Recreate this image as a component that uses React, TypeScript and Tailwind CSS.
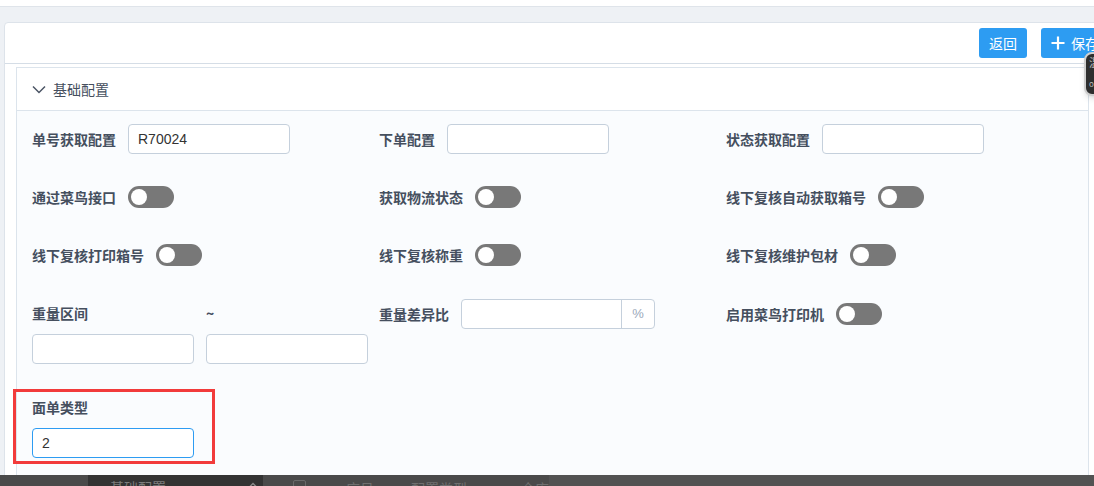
import React from "react";

const LABEL = "text-[14px] font-bold text-[#454f5e] whitespace-nowrap leading-none";

function Toggle() {
  return (
    <div className="w-[46px] h-[22px] rounded-full bg-[#787878] p-[3px] flex items-center shrink-0">
      <div className="w-4 h-4 rounded-full bg-white" />
    </div>
  );
}

function TextBox({ value = "", focus = false, w = "w-[162px]" }: { value?: string; focus?: boolean; w?: string }) {
  return (
    <div
      className={`${w} h-[30px] shrink-0 rounded-[4px] border bg-white flex items-center px-[9px] text-[14px] text-[#333] font-['Liberation_Sans',Arial,sans-serif] ${
        focus ? "border-[#2d9cf2]" : "border-[#c5d0dc]"
      }`}
    >
      {value}
    </div>
  );
}

function Row({ label, children }: { label: string; children: React.ReactNode }) {
  return (
    <div className="h-[30px] flex items-center gap-3">
      <span className={LABEL}>{label}</span>
      {children}
    </div>
  );
}

export default function App() {
  return (
    <div className="relative w-[1094px] h-[486px] overflow-hidden flex flex-col bg-white font-['Noto_Sans_CJK_SC','Liberation_Sans',sans-serif]">
      <div className="flex-1 min-h-0 overflow-hidden flex flex-col">
        <div className="h-[6px] bg-white shrink-0" />
        <div className="flex-1 border-t border-[#dfe4ea] bg-[#eef1f5] pt-[15px] pl-[4px]">
          <div className="w-[1110px] h-[600px] bg-white border border-[#dde3ea] rounded-[4px]">
            {/* header */}
            <div className="h-[41px] border-b border-[#d5dde6] flex items-center justify-end pr-[6px] gap-[14px]">
              <button className="w-[48px] h-[30px] rounded-[3px] bg-[#2d9cf2] text-white text-[14px] flex items-center justify-center">
                返回
              </button>
              <button className="w-[66px] h-[30px] rounded-[3px] bg-[#2d9cf2] text-white text-[14px] flex items-center pl-[10px] gap-[6px]">
                <svg width="14" height="14" viewBox="0 0 14 14">
                  <path d="M7 0.5V13.5M0.5 7H13.5" stroke="white" strokeWidth="2.2" />
                </svg>
                保存
              </button>
            </div>
            {/* body */}
            <div className="pt-[3px] pl-[11px]">
              <div className="w-[1073px] border border-[#dce4ec] bg-[#fafcfe]">
                <div className="h-[43px] bg-white border-b border-[#dce4ec] flex items-center pl-[15px] gap-[7px]">
                  <svg width="14" height="9" viewBox="0 0 14 9">
                    <polyline points="1,1.5 7,7.5 13,1.5" fill="none" stroke="#4a5464" strokeWidth="1.5" />
                  </svg>
                  <span className="text-[14px] text-[#454f5e]">基础配置</span>
                </div>
                <div className="pt-[13px] pl-[15px] pb-[28px]">
                  <div className="w-[1041px] grid grid-cols-3 gap-y-[28px] items-start">
                    <Row label="单号获取配置">
                      <TextBox value="R70024" />
                    </Row>
                    <Row label="下单配置">
                      <TextBox />
                    </Row>
                    <Row label="状态获取配置">
                      <TextBox />
                    </Row>

                    <Row label="通过菜鸟接口">
                      <Toggle />
                    </Row>
                    <Row label="获取物流状态">
                      <Toggle />
                    </Row>
                    <Row label="线下复核自动获取箱号">
                      <Toggle />
                    </Row>

                    <Row label="线下复核打印箱号">
                      <Toggle />
                    </Row>
                    <Row label="线下复核称重">
                      <Toggle />
                    </Row>
                    <Row label="线下复核维护包材">
                      <Toggle />
                    </Row>

                    <div className="grid grid-cols-[162px_162px] gap-x-3 gap-y-[6px]">
                      <div className={`h-[30px] flex items-center ${LABEL}`}>重量区间</div>
                      <div className={`h-[30px] flex items-center ${LABEL}`}>~</div>
                      <TextBox />
                      <TextBox />
                    </div>
                    <div className="h-[30px] flex items-center gap-3 mt-px">
                      <span className={LABEL}>重量差异比</span>
                      <div className="w-[194px] h-[30px] flex rounded-[4px] border border-[#c5d0dc] bg-white overflow-hidden">
                        <div className="flex-1" />
                        <div className="w-[33px] border-l border-[#c5d0dc] flex items-center justify-center text-[13px] text-[#9aa8ba] font-['Liberation_Sans',Arial,sans-serif]">
                          %
                        </div>
                      </div>
                    </div>
                    <div className="h-[30px] flex items-center gap-3 mt-px">
                      <span className={LABEL}>启用菜鸟打印机</span>
                      <Toggle />
                    </div>

                    <div className="relative flex flex-col gap-[6px]">
                      <div className={`h-[30px] flex items-center ${LABEL}`}>面单类型</div>
                      <TextBox value="2" focus />
                      <div className="absolute left-[-19px] top-[-3px] w-[202px] h-[75px] border-[3px] border-[#f23b3b] pointer-events-none" />
                    </div>
                  </div>
                </div>
              </div>
            </div>
          </div>
        </div>
      </div>

      {/* bottom dark strip */}
      <div className="h-[11px] shrink-0 flex overflow-hidden bg-[#4a4a4a] text-[14px] leading-[14px]">
        <div className="w-[88px]" />
        <div className="w-[175px] bg-[#333] flex items-start pt-[5px] pl-[22px] text-[#7c7c7c]">
          <span>基础配置</span>
          <svg className="ml-[82px] mt-[2px]" width="10" height="6" viewBox="0 0 10 6">
            <polyline points="1,5.5 5,1.5 9,5.5" fill="none" stroke="#8a8a8a" strokeWidth="1.4" />
          </svg>
        </div>
        <div className="w-[30px]" />
        <div className="w-[13px] h-[14px] mt-[5px] rounded-[2px] border border-[#6a6a6a]" />
        <div className="flex items-start pt-[6px] text-[#6f6f6f]">
          <span className="ml-[40px]">序号</span>
          <span className="ml-[37px]">配置类型</span>
          <span className="ml-[54px]">仓库</span>
        </div>
        <div className="flex-1 bg-[#525252]" />
      </div>

      {/* tooltip overlay at right edge */}
      <div className="absolute left-[1084px] top-[52px] w-[40px] h-[44px] rounded-[8px] bg-[#2e2e2e] border-2 border-[#cfcfcf] shadow-md overflow-hidden pl-[3px] text-[11px] leading-[12px] text-[#bbb]">
        <div className="mt-[2px]">温</div>
        <div className="mt-[10px] text-[8px]">o</div>
      </div>
    </div>
  );
}
